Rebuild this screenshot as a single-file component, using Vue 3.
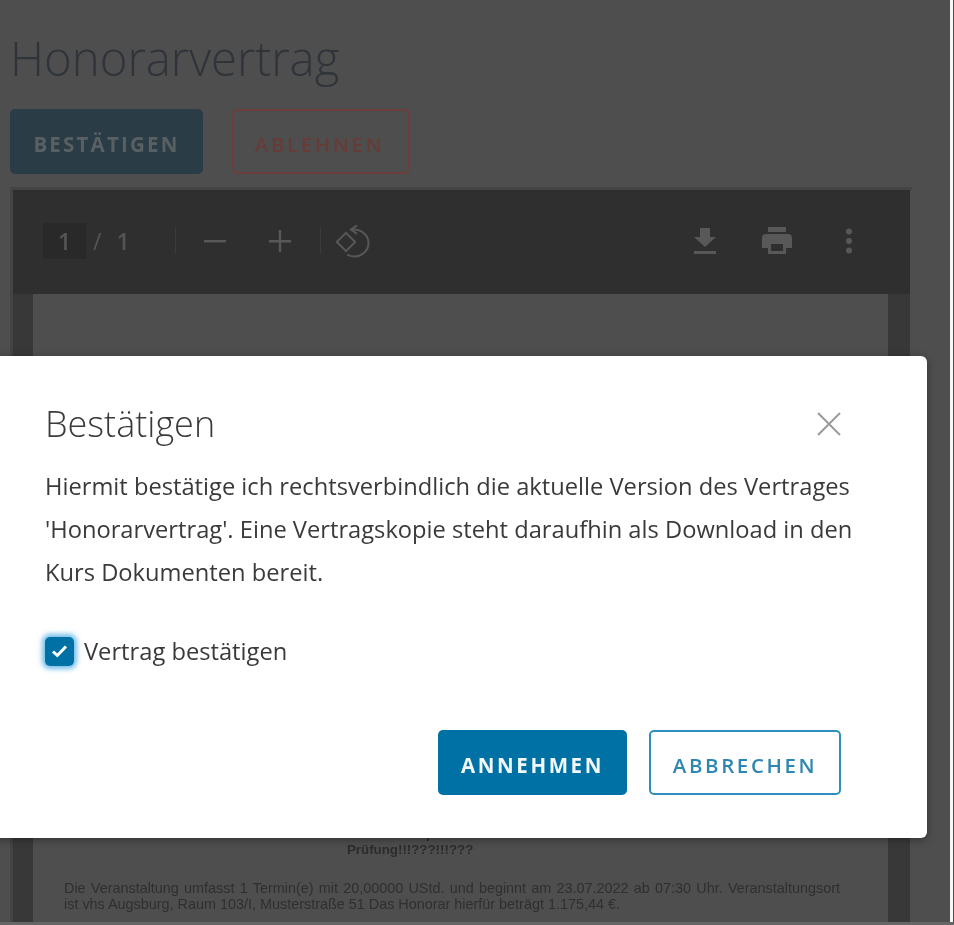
<script setup>
const bodyText = "Hiermit bestätige ich rechtsverbindlich die aktuelle Version des Vertrages 'Honorarvertrag'. Eine Vertragskopie steht daraufhin als Download in den Kurs Dokumenten bereit."
</script>

<template>
  <div class="screen">
    <main class="page">
      <h1 class="title">Honorarvertrag</h1>
      <div class="actions">
        <button class="btn btn-confirm">BESTÄTIGEN</button>
        <button class="btn btn-reject">ABLEHNEN</button>
      </div>
      <section class="viewer">
        <div class="toolbar">
          <div class="pager">
            <span class="page-input">1</span>
            <span class="page-sep">/</span>
            <span class="page-total">1</span>
          </div>
          <span class="divider first"></span>
          <svg class="tool minus" width="22" height="22" viewBox="0 0 22 22"><path d="M0 10h22v2.400H0z" fill="#585858"/></svg>
          <svg class="tool plus" width="22" height="22" viewBox="0 0 22 22"><path d="M0 10h9.800V0h2.400v10H22v2.400h-9.800V22H9.800v-9.600H0z" fill="#585858"/></svg>
          <span class="divider second"></span>
          <svg class="tool rotate" width="34" height="34" viewBox="0 0 34 34" fill="none" stroke="#585858" stroke-width="2"><path d="M.8 17 10 7.800l9.200 9.200L10 26.200z"/><path d="M16 4.500c9-.8 16.500 5.500 16.500 13.500 0 7.500-6.500 13.500-14 13.500-3 0-5.500-.8-7.500-2"/><path d="M21 .5 15 4.500l6 4.500"/></svg>
          <div class="spacer"></div>
          <svg class="tool" width="22" height="26" viewBox="0 0 22 26"><path d="M6 0h10v9h6L11 19 0 9h6zM0 23h22v3H0z" fill="#585858"/></svg>
          <svg class="tool print" width="30" height="27" viewBox="0 0 30 27"><path d="M6 0h18v5H6zM4 7h22a4 4 0 0 1 4 4v10h-6v6H6v-6H0V11a4 4 0 0 1 4-4zm5 10v7h12v-7z" fill="#585858" fill-rule="evenodd"/></svg>
          <svg class="tool more" width="8" height="26" viewBox="0 0 8 26"><circle cx="4" cy="3.500" r="3" fill="#585858"/><circle cx="4" cy="13" r="3" fill="#585858"/><circle cx="4" cy="22.500" r="3" fill="#585858"/></svg>
        </div>
        <div class="doc-wrap">
          <div class="doc">
            <div class="doc-row">
              <b class="cut-a">Nr. 0085</b>
              <b class="cut-b">1/21</b>
              <b class="cut-c">Soziale Kompetenz und<br>Prüfung!!!???!!!???</b>
            </div>
            <p class="doc-text"><span class="doc-line">Die Veranstaltung umfasst 1 Termin(e) mit 20,00000 UStd. und beginnt am 23.07.2022 ab 07:30 Uhr. Veranstaltungsort</span><span>ist vhs Augsburg, Raum 103/I, Musterstraße 51 Das Honorar hierfür beträgt 1.175,44 €.</span></p>
          </div>
        </div>
      </section>
    </main>
    <div class="edge"></div>
    <div class="foot"></div>

    <div class="modal">
      <div class="modal-head">
        <h2 class="modal-title">Bestätigen</h2>
        <svg class="close" width="24" height="24" viewBox="0 0 24 24"><path d="M1 1l22 22M23 1 1 23" stroke="#9a9a9a" stroke-width="2" fill="none"/></svg>
      </div>
      <p class="modal-body">{{ bodyText }}</p>
      <label class="check-row">
        <span class="check">
          <svg width="17" height="14" viewBox="0 0 17 14"><path d="M2 7.500 6.300 11.500 15 2.500" stroke="#fff" stroke-width="3" fill="none"/></svg>
        </span>
        <span class="check-label">Vertrag bestätigen</span>
      </label>
      <div class="modal-actions">
        <button class="btn btn-accept">ANNEHMEN</button>
        <button class="btn btn-cancel">ABBRECHEN</button>
      </div>
    </div>
  </div>
</template>

<style scoped>
.screen {
  position: relative;
  width: 954px;
  height: 925px;
  overflow: hidden;
  background: #4e4e4e;
  font-family: "Open Sans", sans-serif;
  filter: blur(0.5px);
}
.page {
  width: 950px;
  height: 922px;
  padding: 28px 0 0 10px;
  box-sizing: border-box;
  overflow: hidden;
}
.title {
  margin: 0;
  height: 81px;
  font-size: 47.300px;
  line-height: 60px;
  font-weight: 300;
  color: #2f343a;
}
.actions {
  display: flex;
  gap: 29px;
}
.btn {
  box-sizing: border-box;
  height: 65px;
  border-radius: 5px;
  font-family: "Open Sans", sans-serif;
  font-size: 20.500px;
  font-weight: 600;
  letter-spacing: 2.600px;
  padding: 5px 0 0;
}
.btn-confirm {
  width: 193px;
  background: #2a3c46;
  border: none;
  color: #596064;
  font-weight: 700;
  letter-spacing: 2.200px;
}
.btn-reject {
  width: 178px;
  background: transparent;
  border: 2px solid #6d3f3c;
  color: #663c39;
  padding-right: 3px;
}
.viewer {
  margin-top: 13px;
  width: 902px;
  border-top: 3px solid #444;
  border-left: 3px solid #444;
  box-sizing: border-box;
}
.toolbar {
  display: flex;
  align-items: center;
  height: 104px;
  background: #2f2f2f;
  padding: 0 57px 3px 30px;
  box-sizing: border-box;
  width: 897px;
}
.pager {
  display: flex;
  align-items: center;
  font-size: 23px;
  font-weight: 600;
  color: #555;
}
.page-input {
  width: 43px;
  height: 36px;
  background: #292929;
  text-align: center;
  line-height: 36px;
}
.page-sep { margin-left: 7px; font-weight: 400; }
.page-total { margin-left: 15px; }
.divider {
  width: 1px;
  height: 26px;
  background: #3b3b3b;
}
.divider.first { margin-left: 45px; }
.divider.second { margin-left: 29px; }
.minus { margin-left: 28px; }
.plus { margin-left: 43px; }
.rotate { margin: 3px 0 0 15px; }
.spacer { flex: 1; }
.print { margin-left: 46px; }
.more { margin-left: 53px; }
.doc-wrap {
  width: 897px;
  height: 630px;
  background: #383838;
  padding: 0 22px 0 20px;
  box-sizing: border-box;
}
.doc {
  height: 100%;
  background: #4e4e4e;
  padding: 0 48px 12px 31px;
  box-sizing: border-box;
  display: flex;
  flex-direction: column;
  justify-content: flex-end;
  color: #2c2c2c;
  font-family: "Liberation Sans", sans-serif;
  font-size: 13.300px;
  line-height: 16px;
}
.doc-row {
  display: flex;
  padding-left: 3px;
}
.doc-row b { display: block; }
.cut-a { width: 123px; }
.cut-b { width: 157px; }
.doc-text {
  margin: 22px 0 0;
  font-size: 14.400px;
  color: #2f2f2f;
}
.doc-line {
  display: block;
  text-align: justify;
  text-align-last: justify;
}
.edge {
  position: absolute;
  top: 0;
  right: 1px;
  width: 3px;
  height: 925px;
  background: #f4f6f8;
}
.foot {
  position: absolute;
  left: 0;
  bottom: 0;
  width: 954px;
  height: 3px;
  background: #666;
}
.modal {
  position: absolute;
  left: -10px;
  top: 356px;
  width: 937px;
  height: 482px;
  background: #fff;
  border-radius: 6px;
  box-shadow: 0 2px 8px rgba(0, 0, 0, .35);
  padding: 0 0 0 55px;
  box-sizing: border-box;
  color: #333;
}
.modal-head {
  display: flex;
  justify-content: space-between;
  align-items: center;
  height: 106px;
  padding: 30px 86px 0 0;
  box-sizing: border-box;
}
.modal-title {
  margin: 0;
  font-size: 36px;
  font-weight: 300;
  line-height: 44px;
  color: #3a3a3a;
}
.modal-body {
  margin: 3px 0 0;
  width: 830px;
  font-size: 23.700px;
  line-height: 43px;
  color: #3a3a3a;
}
.check-row {
  display: flex;
  align-items: center;
  margin-top: 39px;
  height: 36px;
}
.check {
  display: flex;
  align-items: center;
  justify-content: center;
  width: 29px;
  height: 29px;
  border-radius: 5px;
  background: #0071a4;
  box-shadow: 0 0 5px 3px rgba(70, 170, 225, .75);
}
.check-label {
  margin-left: 10px;
  font-size: 23.700px;
  color: #3a3a3a;
}
.modal-actions {
  position: absolute;
  top: 374px;
  right: 86px;
  display: flex;
  gap: 22px;
}
.btn-accept {
  width: 189px;
  background: #0071a4;
  border: none;
  color: #f2f7fa;
  font-weight: 700;
}
.btn-cancel {
  width: 192px;
  background: #fff;
  border: 2px solid #2e8fbd;
  color: #2e86b2;
}
</style>
